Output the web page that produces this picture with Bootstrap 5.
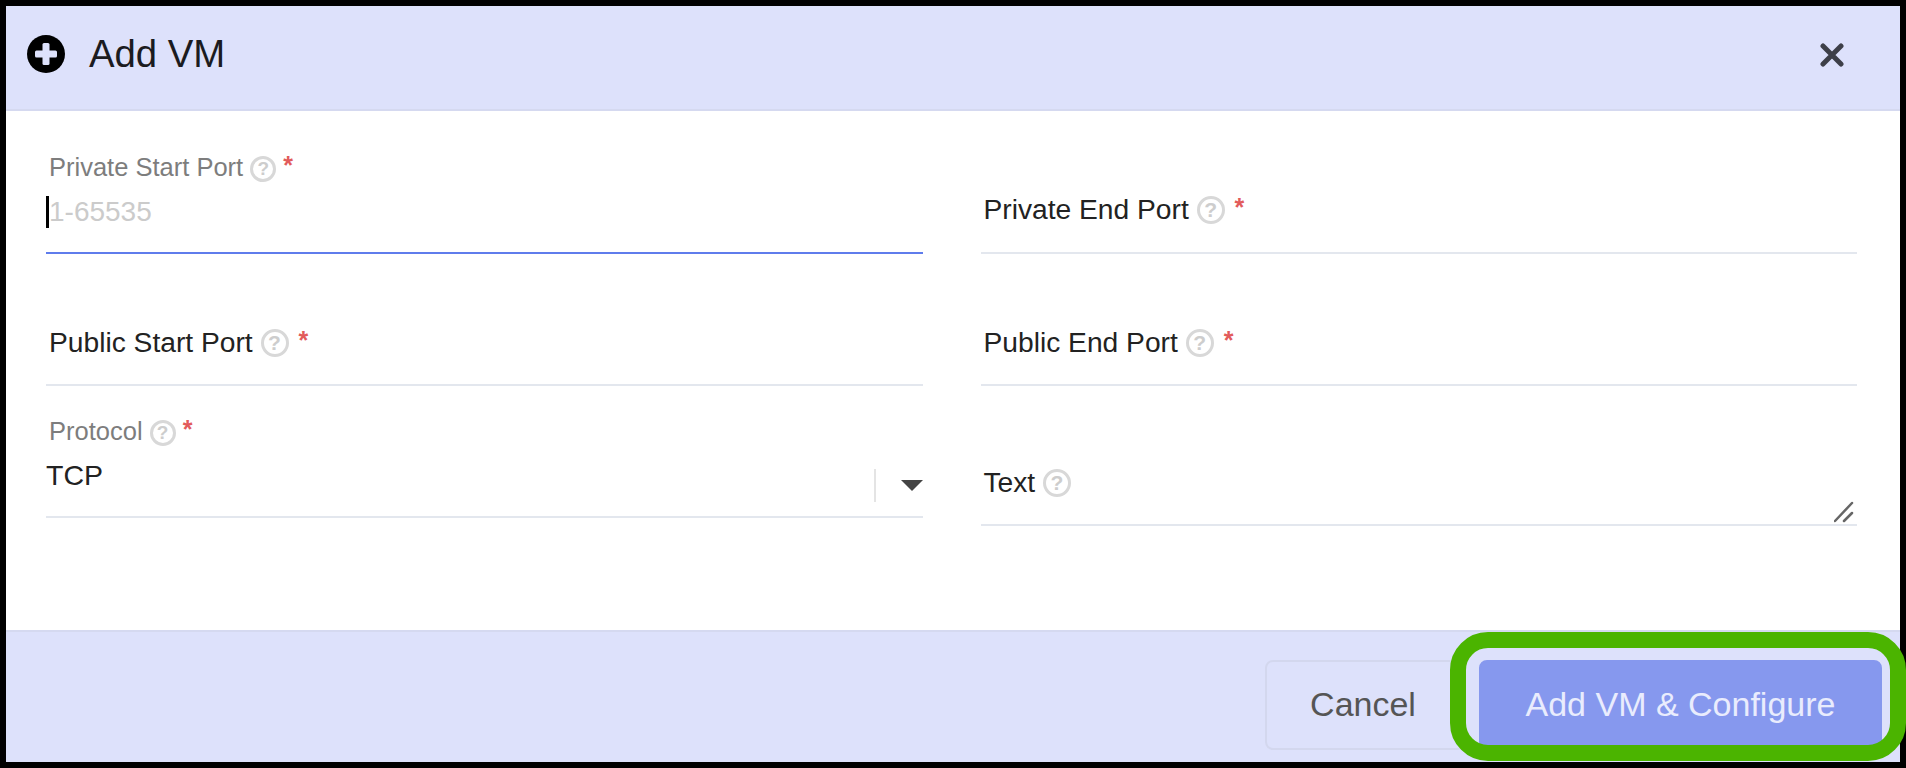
<!DOCTYPE html>
<html lang="en">
<head>
<meta charset="utf-8">
<title>Add VM</title>
<link rel="stylesheet" href="https://cdn.jsdelivr.net/npm/bootstrap@5.3.0/dist/css/bootstrap.min.css">
<style>
html,body{height:100%;margin:0;overflow:hidden}
body{background:#000;font-family:"Liberation Sans",Arial,sans-serif;padding:6px 6px 6px 6px;position:relative}
.vm-panel{background:#fff;height:756px;width:1894px}
.vm-head{background:#dde1fb;height:105px;border-bottom:2px solid #d5d9f0;padding:0 56px 7px 21px}
.vm-plus{width:38px;height:38px;margin-right:24px;flex:none}
.vm-title{font-size:38.3px;line-height:44px;color:#1b1b1f;margin:0;font-weight:400}
.vm-x{width:24px;height:24px;background:none;border:0;padding:0;display:block}
.vm-body{padding:43px 43px 0 40px}
.vm-row{--bs-gutter-x:58px;--bs-gutter-y:32px}
.vm-field{height:100px;border-bottom:2px solid #e3e7ee;position:relative}
.vm-field.rest{padding-bottom:26px}
.vm-field.top-rest{padding-bottom:27px}
.vm-field.tall{height:108px}
.vm-field.on{border-bottom-color:#5f7cec}
.vm-label{font-size:28.2px;line-height:32px;color:#222;padding-left:3px;margin:0;font-weight:400}
.vm-label.up{font-size:25.5px;line-height:28px;color:#7d7d7d;margin-top:-1px}
.vm-help{display:inline-flex;align-items:center;justify-content:center;width:28px;height:28px;border:3px solid #d8d8d8;border-radius:50%;color:#cdcdcd;font-size:21px;font-weight:700;line-height:1;margin-left:0;vertical-align:2px}
.up .vm-help{width:26px;height:26px;font-size:19px;vertical-align:1px}
.vm-req{color:#e25b5b;font-size:25px;font-weight:700;margin-left:10px;vertical-align:3px;line-height:1}
.up .vm-req{margin-left:7px;vertical-align:2px}
.vm-input{border:0;outline:0;background:none;padding:0;font:28px/32px "Liberation Sans",Arial,sans-serif;width:100%;border-left:3px solid #000;height:32px;margin-top:14px}
.vm-input::placeholder{color:#cbcbcb;opacity:1}
.vm-val{font-size:28.5px;line-height:32px;color:#222;margin-top:13px}
.vm-sep{width:2px;height:33px;background:#e4e4e4;right:47px;top:51px}
.vm-arrow{width:0;height:0;border-left:11.5px solid transparent;border-right:11.5px solid transparent;border-top:11px solid #444;right:0;top:62px}
.vm-grip{width:20px;height:22px;right:3px;bottom:1px}
.vm-foot{background:#dde1fb;height:132px;border-top:2px solid #d5d9f0;padding:28px 18px 12px 0;gap:14px;margin-top:auto}
.vm-btn{font-size:34px;line-height:40px;border-radius:8px;height:90px;border:2px solid #d3d7ee;background:transparent;color:#555;width:200px;padding:0 4px 3px 0;text-align:center}
.vm-btn.go{background:#8698ee;color:#e9ecfd;border-color:#8698ee;width:403px;padding:0 0 3px 0}
.vm-ring{left:1450px;top:632px;width:456px;height:129px;border:16px solid #4bb400;border-radius:38px;pointer-events:none}
</style>
</head>
<body>
<div class="vm-panel d-flex flex-column">
  <div class="vm-head d-flex align-items-center">
    <svg class="vm-plus" viewBox="0 0 38 38" aria-hidden="true"><circle cx="19" cy="19" r="19" fill="#000"/><rect x="15.5" y="8" width="7" height="22" rx="1.5" fill="#dde1fb"/><rect x="8" y="15.5" width="22" height="7" rx="1.5" fill="#dde1fb"/></svg>
    <h5 class="vm-title flex-grow-1">Add VM</h5>
    <button class="vm-x" type="button" aria-label="Close"><svg width="24" height="24" viewBox="0 0 24 24"><path d="M3 3 21 21M21 3 3 21" stroke="#3d3f48" stroke-width="5" stroke-linecap="round"/></svg></button>
  </div>
  <div class="vm-body">
    <div class="row vm-row">
      <div class="col-6">
        <div class="vm-field on d-flex flex-column">
          <label class="vm-label up d-block">Private Start Port <span class="vm-help">?</span><span class="vm-req">*</span></label>
          <input class="vm-input" placeholder="1-65535">
        </div>
      </div>
      <div class="col-6">
        <div class="vm-field top-rest d-flex flex-column justify-content-end">
          <label class="vm-label">Private End Port <span class="vm-help">?</span><span class="vm-req">*</span></label>
        </div>
      </div>
      <div class="col-6">
        <div class="vm-field rest d-flex flex-column justify-content-end">
          <label class="vm-label">Public Start Port <span class="vm-help">?</span><span class="vm-req">*</span></label>
        </div>
      </div>
      <div class="col-6">
        <div class="vm-field rest d-flex flex-column justify-content-end">
          <label class="vm-label">Public End Port <span class="vm-help">?</span><span class="vm-req">*</span></label>
        </div>
      </div>
      <div class="col-6">
        <div class="vm-field d-flex flex-column">
          <label class="vm-label up d-block">Protocol <span class="vm-help">?</span><span class="vm-req">*</span></label>
          <div class="vm-val">TCP</div>
          <span class="vm-sep position-absolute"></span>
          <span class="vm-arrow position-absolute"></span>
        </div>
      </div>
      <div class="col-6">
        <div class="vm-field tall rest d-flex flex-column justify-content-end">
          <label class="vm-label">Text <span class="vm-help">?</span></label>
          <svg class="vm-grip position-absolute" viewBox="0 0 20 22" aria-hidden="true"><path d="M1 20 18 2M10 20 18 12" stroke="#666" stroke-width="2.5" stroke-linecap="round"/></svg>
        </div>
      </div>
    </div>
  </div>
  <div class="vm-foot d-flex justify-content-end">
    <button class="vm-btn" type="button">Cancel</button>
    <button class="vm-btn go" type="button">Add VM &amp; Configure</button>
  </div>
</div>
<div class="vm-ring position-absolute"></div>
</body>
</html>
